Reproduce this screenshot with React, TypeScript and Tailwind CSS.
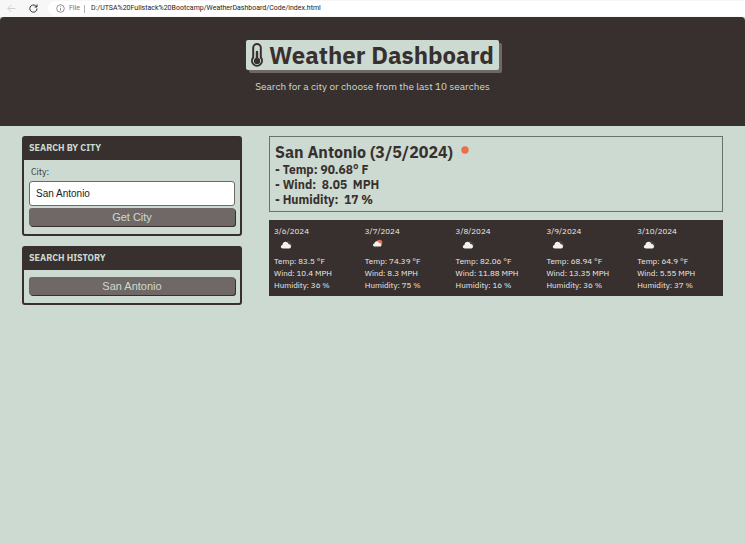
import { useState } from "react";
import type { ReactNode } from "react";

type Day = { date: string; icon: "cloud" | "rain"; temp: string; wind: string; humidity: string };

const days: Day[] = [
  { date: "3/6/2024", icon: "cloud", temp: "83.5", wind: "10.4", humidity: "36" },
  { date: "3/7/2024", icon: "rain", temp: "74.39", wind: "8.3", humidity: "75" },
  { date: "3/8/2024", icon: "cloud", temp: "82.06", wind: "11.88", humidity: "16" },
  { date: "3/9/2024", icon: "cloud", temp: "68.94", wind: "13.35", humidity: "36" },
  { date: "3/10/2024", icon: "cloud", temp: "64.9", wind: "5.55", humidity: "37" },
];

function BrowserBar() {
  return (
    <div className="flex h-[17px] items-center bg-[#f7f7f7] font-['Roboto',sans-serif] text-[7px] text-[#1b1b1b]">
      <button aria-label="Back" className="ml-[7px]">
        <svg className="h-[9px] w-[9px]" viewBox="0 0 9 9" fill="none" stroke="#d0d0d0">
          <path d="M8.5 4.5H.8M4.3 1 .8 4.5 4.3 8" />
        </svg>
      </button>
      <button aria-label="Reload" className="ml-[13px]">
        <svg className="h-[9px] w-[9px]" viewBox="0 0 9 9" fill="none" stroke="#333">
          <path d="M8 4.5A3.6 3.6 0 1 1 6.7 1.8L8 3M8 .5V3H5.5" />
        </svg>
      </button>
      <div className="ml-[10px] flex h-[15px] flex-1 items-center rounded-l-full bg-white pl-2">
        <svg className="h-[9px] w-[9px]" viewBox="0 0 9 9" fill="none" stroke="#777" strokeWidth=".8">
          <circle cx="4.5" cy="4.5" r="3.8" />
          <path d="M4.5 4v2.6M4.5 2.3v.9" />
        </svg>
        <span className="ml-1 text-[#757575]">File</span>
        <span className="ml-1 h-2 w-px bg-[#b5b5b5]" />
        <span className="ml-[6px]">D:/UTSA%20Fullstack%20Bootcamp/WeatherDashboard/Code/index.html</span>
      </div>
    </div>
  );
}

function Thermometer() {
  return (
    <svg className="h-6 w-3 shrink-0" viewBox="0 0 12 24" fill="none" stroke="#38302e">
      <path d="M2.2 14.5V4.8a3.8 3.8 0 0 1 7.6 0v9.7a5 5 0 1 1-7.6 0Z" strokeWidth="2" />
      <path d="M6 9v9" strokeWidth="2.4" strokeLinecap="round" />
      <circle cx="6" cy="18" r="3.2" fill="#38302e" stroke="none" />
    </svg>
  );
}

function WeatherIcon({ kind }: { kind: Day["icon"] }) {
  return (
    <svg className="ml-[2px] block h-[18px] w-5" viewBox="0 0 20 18">
      {kind === "cloud" ? (
        <>
          <path d="M10 9V5.5c1-2.2 4-2 4.500.5 2 .4 2 3 0 3.500h-4.500Z" fill="#4b4543" />
          <path d="M7 11.500c-2.700 0-2.800-3-.6-3.500.5-3.900 4.900-4.300 6-.9 3.200-.1 3.500 4.400.9 4.400Z" fill="#f4f2f0" />
        </>
      ) : (
        <>
          <circle cx="12.5" cy="5.5" r="2.8" fill="#e96e50" />
          <path d="M8 9.500c-2.500 0-2.500-2.800-.6-3.100.5-2.700 3.900-3 4.700-.5 2.900-.1 3.100 3.600.9 3.600Z" fill="#f4f2f0" />
          <path d="m9 9.800-.6 1M11.500 9.800l-.6 1" stroke="#5b5351" strokeWidth=".7" />
        </>
      )}
    </svg>
  );
}

function Panel({ title, children }: { title: string; children: ReactNode }) {
  return (
    <section className="rounded-[3px] border-2 border-[#38302e]">
      <h2 className="bg-[#38302e] pb-[2px] pl-[5px] text-[9px] leading-5 font-bold text-[#ccdad1]">{title}</h2>
      {children}
    </section>
  );
}

const buttonStyle =
  "block h-[18px] w-full rounded-[3px] bg-[#6f6866] text-center font-['Liberation_Sans',Arial,sans-serif] text-[11px] leading-[18px] text-[#ccdad1] shadow-[1px_1px_0_#38302e]";

export default function App() {
  const [city, setCity] = useState("San Antonio");
  return (
    <div className="min-h-screen bg-[#ccdad1] font-['IBM_Plex_Sans','Noto_Sans',sans-serif] text-[#38302e]">
      <BrowserBar />
      <header className="flex h-[109px] flex-col items-center rounded-t-[4px] bg-[#38302e] pt-[23px]">
        <h1 className="flex h-[30px] items-center gap-[6px] rounded-[2px] bg-[#ccdad1] px-[5px] text-[24px] leading-[30px] font-bold shadow-[3px_3px_0_#6f6866]">
          <Thermometer />
          <span>Weather Dashboard</span>
        </h1>
        <p className="mt-[9px] text-[10px] leading-4 text-[#ccdad1]">Search for a city or choose from the last 10 searches</p>
      </header>
      <main className="flex items-start gap-[27px] px-[22px] pt-[10px]">
        <aside className="flex w-[220px] shrink-0 flex-col gap-[10px]">
          <Panel title="SEARCH BY CITY">
            <form className="px-[5px] pt-[5px] pb-2" onSubmit={(e) => e.preventDefault()}>
              <label htmlFor="city" className="block pl-[2px] text-[9px] leading-[14px]">City:</label>
              <input
                id="city"
                value={city}
                onChange={(e) => setCity(e.target.value)}
                className="mt-[2px] mb-[2px] block h-[25px] w-full rounded-[3px] border border-[#6f6866] bg-white px-[6px] font-['Liberation_Sans',Arial,sans-serif] text-[10px] text-[#1b1b1b]"
              />
              <button className={buttonStyle}>Get City</button>
            </form>
          </Panel>
          <Panel title="SEARCH HISTORY">
            <div className="px-[5px] pt-[7px] pb-2">
              <button className={buttonStyle}>San Antonio</button>
            </div>
          </Panel>
        </aside>
        <div className="min-w-0 flex-1">
          <section className="border border-[#66736b] px-[5px] pt-[5px] pb-1 text-[12px] leading-[15px] font-bold">
            <div className="flex items-start">
              <h2 className="text-[16px] leading-5">San Antonio (3/5/2024)</h2>
              <svg className="mt-1 ml-2 h-2 w-2" viewBox="0 0 8 8">
                <circle cx="4" cy="4" r="3.7" fill="#ec6e4c" />
              </svg>
            </div>
            <p>- Temp: 90.68° F</p>
            <p className="whitespace-pre">- Wind:  8.05  MPH</p>
            <p className="whitespace-pre">- Humidity:  17 %</p>
          </section>
          <section className="mt-2 grid grid-cols-5 bg-[#38302e] pt-[5px] pb-[5px] text-[8px] leading-3 text-[#f0eeec]">
            {days.map((d) => (
              <article key={d.date} className="pl-[5px] whitespace-nowrap">
                <h3>{d.date}</h3>
                <WeatherIcon kind={d.icon} />
                <p>Temp: {d.temp} °F</p>
                <p>Wind: {d.wind} MPH</p>
                <p>Humidity: {d.humidity} %</p>
              </article>
            ))}
          </section>
        </div>
      </main>
    </div>
  );
}
